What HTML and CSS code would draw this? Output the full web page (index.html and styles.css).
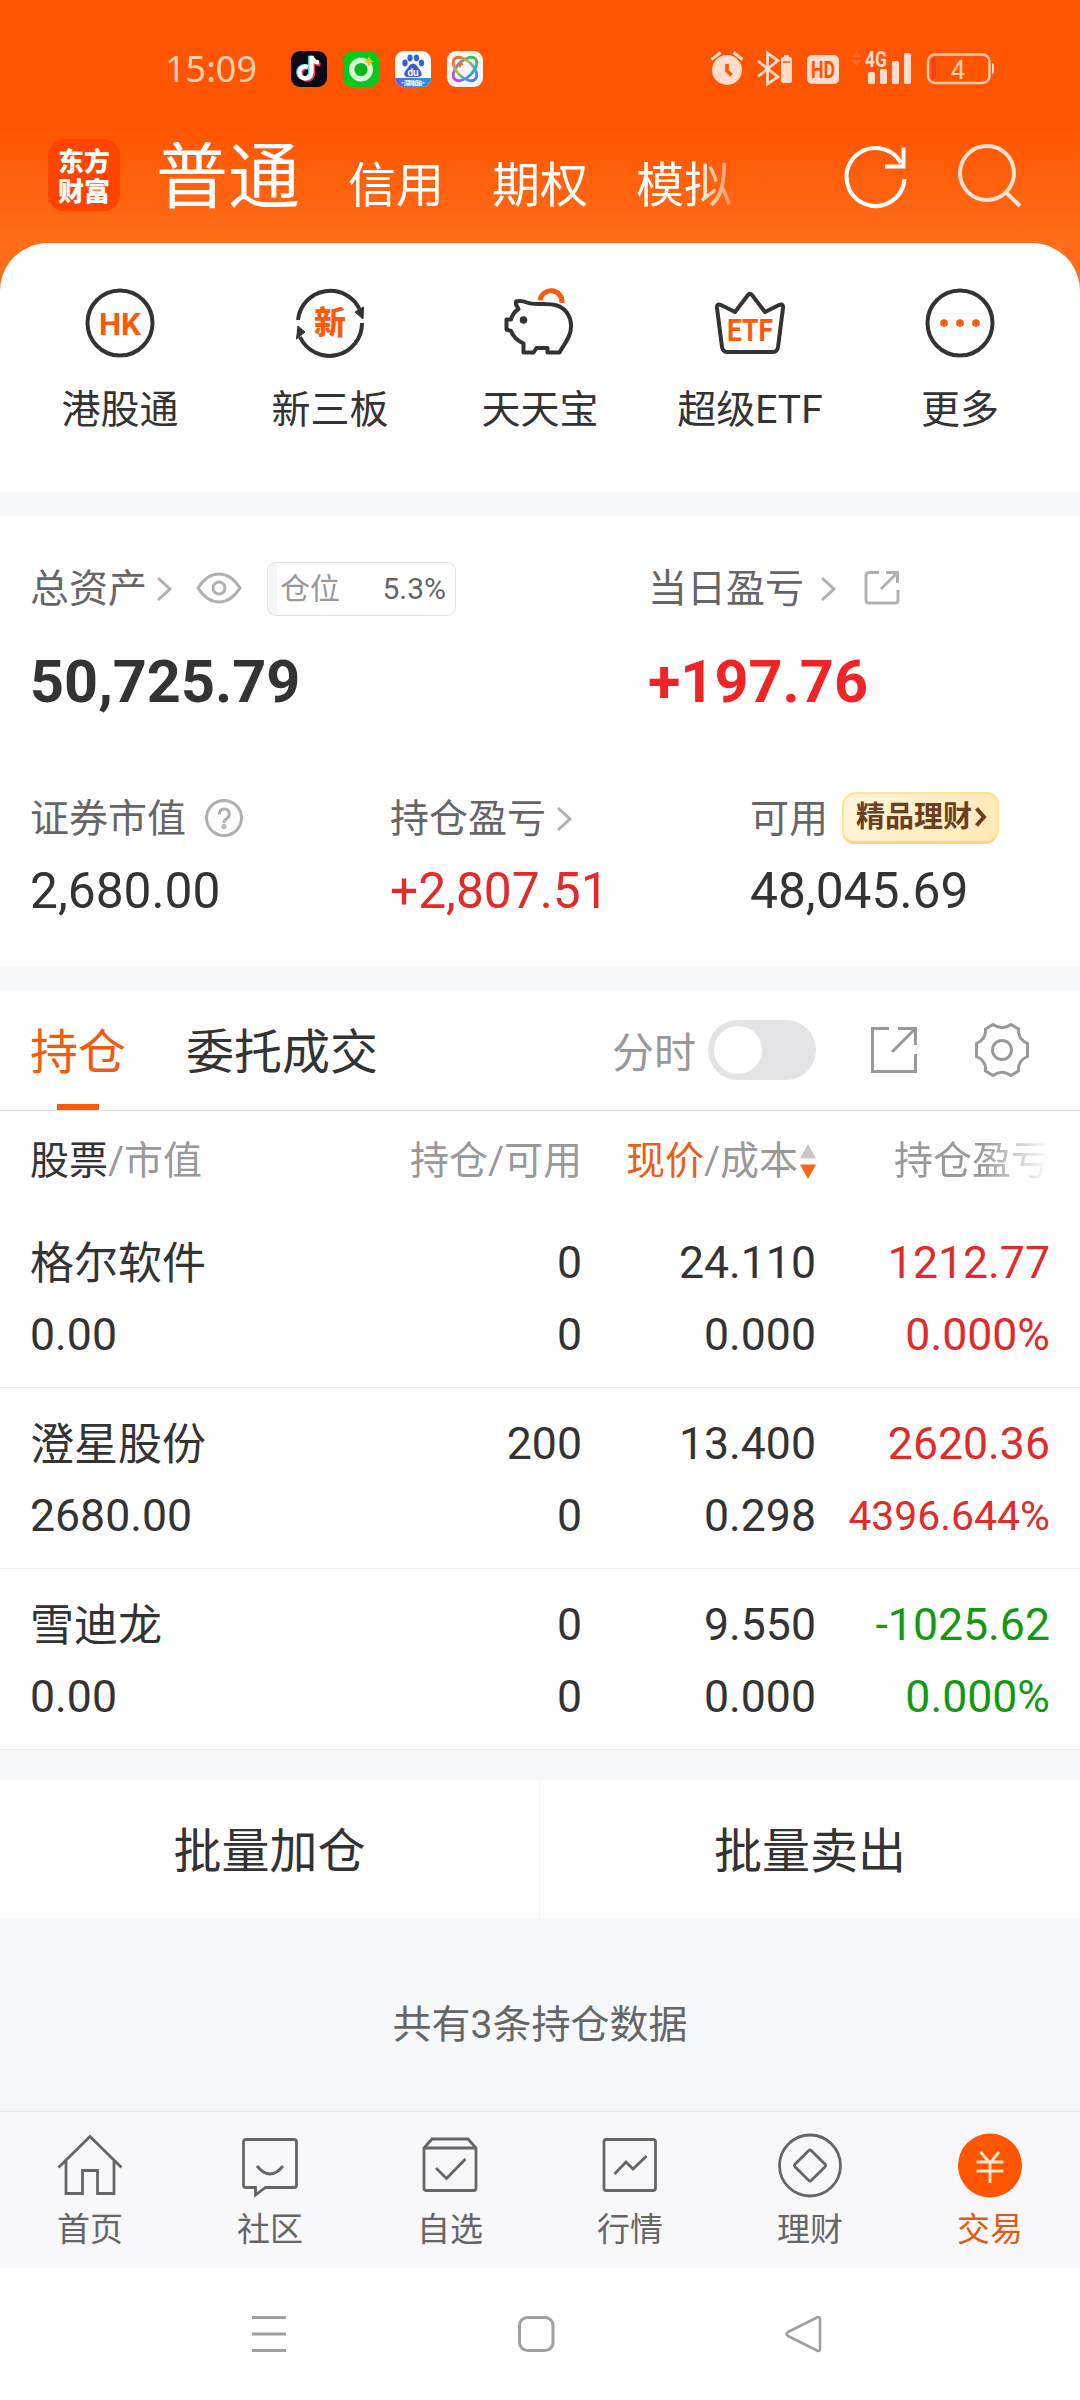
FILE: index.html
```html
<!DOCTYPE html>
<html lang="zh-CN">
<head>
<meta charset="utf-8">
<title>交易</title>
<link rel="stylesheet" href="styles.css">
</head>
<body>
<div class="top">
  <div class="status">
    <span class="clock">15:09</span>
    <div class="apps">
      <svg width="36" height="36" viewBox="0 0 36 36"><rect width="36" height="36" rx="9" fill="#0b0a14"/><g fill="none" stroke-width="4.2"><path d="M18 16.5a6 6 0 1 0 3 6V6c.6 4 3 6 7.500 6.500" stroke="#f0315a" transform="translate(1 1)"/><path d="M16.500 16a6 6 0 1 0 3.500 6V5c.6 4 3 6 7.500 6.500" stroke="#3fe0e6" transform="translate(-.8 -.3)"/><path d="M17 16a6 6 0 1 0 3.500 6V5c.6 4 3 6 7.500 6.500" stroke="#fff"/></g></svg>
      <svg width="36" height="36" viewBox="0 0 36 36"><rect width="36" height="36" rx="9" fill="#08c81b"/><circle cx="18" cy="18.500" r="9.300" fill="#08b818" stroke="#d6f6d4" stroke-width="5.400"/><path d="M26 5l1.600 3.800L31 10.500l-3.400 1.600L26 16l-1.600-3.900L21 10.500l3.400-1.700z" fill="#f6bd12"/></svg>
      <svg width="36" height="36" viewBox="0 0 36 36"><defs><linearGradient id="du"><stop offset="0" stop-color="#5b62e8"/><stop offset="1" stop-color="#139be8"/></linearGradient><clipPath id="dc"><rect width="36" height="36" rx="9"/></clipPath></defs><g clip-path="url(#dc)"><path fill="#fff" d="M0 0h36v36H0z"/><path fill="url(#du)" d="M0 27h36v9H0z"/></g><g fill="#2f62dc"><ellipse cx="10" cy="12" rx="2.700" ry="3.400"/><ellipse cx="15" cy="7" rx="2.600" ry="3.400"/><ellipse cx="21.500" cy="7" rx="2.600" ry="3.400"/><ellipse cx="26.500" cy="12" rx="2.600" ry="3.400"/></g><path d="M18 12.500c3.500 0 4.500 4 7 6.500 3.500 4 1.500 7.500-3 7h-8c-4.500.5-6.500-3-3-7 2.500-2.500 3.500-6.500 7-6.500z" fill="#4157dd"/><text x="18" y="24.500" class="du">du</text><text x="18" y="34" class="du-sub" textLength="27">·深圳加油·</text></svg>
      <svg width="36" height="36" viewBox="0 0 36 36"><defs><linearGradient id="rb" x1="0" y1="0" x2="1" y2="0"><stop offset="0" stop-color="#f06a28"/><stop offset=".4" stop-color="#a8c850"/><stop offset=".7" stop-color="#3da8e0"/><stop offset="1" stop-color="#4680ee"/></linearGradient><linearGradient id="rc" x1="0" y1="0" x2="1" y2="0"><stop offset="0" stop-color="#b44ce8"/><stop offset=".5" stop-color="#4a98e8"/><stop offset="1" stop-color="#48c04a"/></linearGradient></defs><rect width="36" height="36" rx="9" fill="#faf5f3"/><g fill="none" stroke-width="2.800"><ellipse cx="18" cy="18" rx="14.500" ry="8" transform="rotate(-45 18 18)" stroke="url(#rc)"/><ellipse cx="18" cy="18" rx="14.500" ry="8" transform="rotate(45 18 18)" stroke="url(#rb)"/></g><path d="M13 9.500l1.200 2.600 2.800 1.200-2.800 1.200L13 17.500l-1.200-3L9 13.300l2.800-1.200z" fill="#f06a28"/></svg>
    </div>
    <svg class="signals" width="286" height="36" viewBox="0 0 286 36">
      <g fill="#ffdccb">
        <circle cx="17" cy="19" r="15"/>
        <path d="M1.500 8.500l9-7M32.500 8.500l-9-7" stroke="#ffdccb" stroke-width="3"/>
        <path d="M17 13v7l4.500 4" fill="none" stroke="#ff5500" stroke-width="3.500"/>
        <path d="M48 10l20 16-10.500 7V2L68 9.500 48 25.500" fill="none" stroke="#ffdccb" stroke-width="2.800"/>
        <rect x="71" y="6" width="11" height="26" rx="2.500"/><path d="M74 4h5v2h-5z"/><path d="M73 11h7" stroke="#ff5500" stroke-width="1.500"/>
        <rect x="97" y="4" width="32" height="29" rx="5"/>
        <path d="M146.500 0l5 6h-10zM146.500 15l5-6h-10z" fill="#ff6c28"/>
        <rect x="158" y="21" width="7" height="12" rx="1.500"/><rect x="170" y="18" width="7" height="15" rx="1.500"/><rect x="182" y="10" width="7" height="23" rx="1.500"/><rect x="194" y="2" width="7" height="31" rx="1.500"/>
        <rect x="218" y="3.500" width="61.500" height="28.500" rx="7" fill="none" stroke="#ffc9a6" stroke-width="2.500"/><path d="M282 12q2 0 2 3v5q0 3-2 3z"/>
        <rect x="222" y="7" width="3.500" height="21" fill="#f03c28"/>
      </g>
      <text x="113" y="27" class="hd" textLength="24" lengthAdjust="spacingAndGlyphs">HD</text><text x="166" y="16" class="g4" textLength="22" lengthAdjust="spacingAndGlyphs">4G</text><text x="248" y="27.500" class="bat">4</text>
    </svg>
  </div>
  <div class="header">
    <div class="logo"><span>东方</span><span>财富</span></div>
    <div class="modes"><span class="current">普通</span><span>信用</span><span>期权</span><span>模拟</span></div>
    <svg class="head-icons" width="180" height="70" viewBox="0 0 180 70" fill="none" stroke-width="4"><path d="M59 23A29 29 0 1 0 62.500 39" stroke="#fff" transform="translate(0 -1)"/><path d="M61.500 6.500v19H43" stroke="#fff"/><circle cx="145" cy="32" r="27" stroke="#ffe2cf"/><path d="M163.500 51L178 65" stroke="#ffe2cf"/></svg>
  </div>
  <div class="quick">
    <div class="quick-item"><svg width="72" height="72" viewBox="0 0 72 72"><circle cx="36" cy="36" r="32.500" class="ink"/><text x="36" y="47.500" class="ico" textLength="42" lengthAdjust="spacingAndGlyphs">HK</text></svg><span>港股通</span></div>
    <div class="quick-item"><svg width="72" height="72" viewBox="0 0 72 72"><path d="M4 33A32.500 32.500 0 0 1 66 23M68 36A32.500 32.500 0 0 1 6 50" class="ink"/><path d="M61 25l8.500-5-.5 12zM11 45l-8.500 7L4 39z" fill="#333" stroke="#333"/><text x="36" y="47" class="ico xin">新</text></svg><span>新三板</span></div>
    <div class="quick-item"><svg width="72" height="72" viewBox="0 0 72 72"><path d="M36 13.500A11 11 0 0 1 58 16" fill="none" stroke="#fa5a0a" stroke-width="5"/><path d="M23 15.500C31 19 42 15 53 18.500C63 22 67.500 31 67 40C67 50 60 57 55.500 65.500H43.500V61H32.500L29.500 65.500H19.500V56.500C14 54 9 49 7 44L2.500 42.500V32.500H7C8 28 10 25 14.500 22L12 17.500V14.500Q17 13 23 15.500" class="ink"/><circle cx="19.500" cy="33" r="3.800" fill="#333"/></svg><span>天天宝</span></div>
    <div class="quick-item"><svg width="72" height="72" viewBox="0 0 72 72"><path d="M3 21q-.5-5 4-3L21 25 34 8q2-2.500 4 0L51 25 65 18q4.500-2 4 3L64 60q-.8 5-5 5H13q-4.200 0-5-5z" class="ink"/><text x="36" y="54" class="ico" textLength="46" lengthAdjust="spacingAndGlyphs">ETF</text></svg><span>超级ETF</span></div>
    <div class="quick-item"><svg width="72" height="72" viewBox="0 0 72 72"><circle cx="36" cy="36" r="32.500" class="ink"/><g fill="#fa5a0a"><circle cx="20" cy="36" r="3.800"/><circle cx="36" cy="36" r="3.800"/><circle cx="52" cy="36" r="3.800"/></g></svg><span>更多</span></div>
  </div>
</div>

<div class="assets">
  <div class="pair">
    <div>
      <div class="label"><span>总资产</span><svg class="chev first" width="16" height="28" viewBox="0 0 16 28"><path d="M2 3l12 11L2 25"/></svg><svg class="eye" width="46" height="32" viewBox="0 0 46 32"><path d="M2 16Q11 2 23 2t21 14Q35 30 23 30T2 16z"/><circle cx="23" cy="16" r="6"/></svg><div class="ratio"><span>仓位</span><b>5.3%</b></div></div>
      <div class="big">50,725.79</div>
    </div>
    <div>
      <div class="label"><span>当日盈亏</span><svg class="chev wide" width="16" height="28" viewBox="0 0 16 28"><path d="M2 3l12 11L2 25"/></svg><svg class="share" width="36" height="36" viewBox="0 0 36 36"><path d="M15 2.500H5q-3 0-3 3V30q0 3 3 3H31q3 0 3-3V20M22 2.500H33.500V13M33 3L17 19"/></svg></div>
      <div class="big up">+197.76</div>
    </div>
  </div>
  <div class="trio">
    <div>
      <div class="label"><span>证券市值</span><svg class="help" width="40" height="40" viewBox="0 0 40 40"><circle cx="20" cy="20" r="17.500"/><path d="M15.300 16.500q0-5.500 5-5.500t5 5q0 3-2.700 4.800Q20 22.500 20 25"/><circle cx="20" cy="28.500" r="1" /></svg></div>
      <div class="mid">2,680.00</div>
    </div>
    <div>
      <div class="label"><span>持仓盈亏</span><svg class="chev" width="16" height="28" viewBox="0 0 16 28"><path d="M2 3l12 11L2 25"/></svg></div>
      <div class="mid up">+2,807.51</div>
    </div>
    <div>
      <div class="label"><span>可用</span><div class="promo">精品理财<svg width="13" height="22" viewBox="0 0 13 22"><path d="M2.500 2.500L10 11l-7.500 8.500" class="promo-arrow"/></svg></div></div>
      <div class="mid">48,045.69</div>
    </div>
  </div>
</div>

<div class="tabs">
  <span class="tab on">持仓</span><span class="tab">委托成交</span>
  <span class="minute">分时</span><span class="toggle"></span>
  <svg class="export" width="48" height="48" viewBox="0 0 48 48"><path d="M19 2.500H2.500V45.500H45.500V28M28 2.500H45.500V19M45 3L22 26"/></svg>
  <svg class="gear" width="56" height="56" viewBox="0 0 56 56"><path d="M19 2.500Q28 9 37 2.500L44.500 7Q43.500 17 53.500 21.500V34.500Q43.500 39 44.500 49L37 53.500Q28 47 19 53.500L11.500 49Q12.500 39 2.500 34.500V21.500Q12.500 17 11.500 7Z"/><circle cx="28" cy="28" r="9.500"/></svg>
</div>

<div class="grid heads">
  <span><i>股票</i>/市值</span><span>持仓/可用</span>
  <span class="sorted"><em>现价</em>/成本<svg width="16" height="36" viewBox="0 0 16 36"><path d="M8 0l8 14.500H0z" fill="#c8c8c8"/><path d="M0 20.500h16L8 35z" fill="#fa6414"/></svg></span>
  <span class="fading">持仓盈亏</span>
</div>
<div class="grid row"><span class="name">格尔软件</span><span>0</span><span>24.110</span><span class="up">1212.77</span><span>0.00</span><span>0</span><span>0.000</span><span class="up">0.000%</span></div>
<div class="grid row"><span class="name">澄星股份</span><span>200</span><span>13.400</span><span class="up">2620.36</span><span>2680.00</span><span>0</span><span>0.298</span><span class="up tight">4396.644%</span></div>
<div class="grid row"><span class="name">雪迪龙</span><span>0</span><span>9.550</span><span class="down">-1025.62</span><span>0.00</span><span>0</span><span>0.000</span><span class="down">0.000%</span></div>

<div class="batch"><span>批量加仓</span><span>批量卖出</span></div>
<div class="total">共有3条持仓数据</div>

<div class="nav">
  <div><svg width="72" height="72" viewBox="0 0 72 72"><path d="M4.500 38.500L36 7.500 67.500 38.500M12 32V64.500H28.500V41.500H43.500V64.500H60V32"/></svg><span>首页</span></div>
  <div><svg width="72" height="72" viewBox="0 0 72 72"><path d="M12 10.500H60q2.500 0 2.500 2.500V56q0 2.500-2.500 2.500H31.500L21.500 66V58.500H12q-2.500 0-2.500-2.500V13q0-2.500 2.500-2.500zM23 37q13 16 26 0"/></svg><span>社区</span></div>
  <div><svg width="72" height="72" viewBox="0 0 72 72"><path d="M10 19L18 10H54l8 9V59q0 2.500-2.500 2.500H12.500Q10 61.500 10 59zM10 19H62M22 39L32.500 49.500 51.500 30"/></svg><span>自选</span></div>
  <div><svg width="72" height="72" viewBox="0 0 72 72"><rect x="10" y="10.500" width="51.500" height="51" rx="2.500"/><path d="M20.500 45L32 33l7 7L52.500 27"/></svg><span>行情</span></div>
  <div><svg width="72" height="72" viewBox="0 0 72 72"><circle cx="36" cy="36.500" r="30.500"/><rect x="24.500" y="25" width="23" height="23" rx="2" transform="rotate(45 36 36.500)"/></svg><span>理财</span></div>
  <div class="active"><svg width="72" height="72" viewBox="0 0 72 72"><circle cx="36" cy="36.500" r="32" fill="#ff5500" stroke="none"/><path d="M26.500 23L36 34 45 23M36 34V54M22.500 33H49.500M22.500 42H49.500" stroke="#ffe6cf"/></svg><span>交易</span></div>
</div>
<div class="system">
  <svg width="40" height="40" viewBox="0 0 40 40"><path d="M3 3.500H37M3 20H37M3 36.500H37"/></svg>
  <svg width="40" height="40" viewBox="0 0 40 40"><rect x="3.500" y="3.500" width="33.500" height="33" rx="8"/></svg>
  <svg width="40" height="40" viewBox="0 0 40 40"><path d="M34 3.500q3-1.500 3 1.500V35q0 3-3 1.500L5 22q-3-2 0-4z" stroke-width="2.600"/></svg>
</div>
</body>
</html>
```
FILE: styles.css
```css
* { box-sizing: border-box; }
body {
  margin: 0;
  width: 1080px;
  height: 2400px;
  overflow: hidden;
  background: #fff;
  color: #333;
  font-family: Roboto, "Noto Sans CJK SC", sans-serif;
  font-size: 39px;
}
svg { display: block; flex: none; overflow: visible; }
i, em { font-style: normal; }

.top { background: linear-gradient(#ff5500 0, #ff5500 125px, #ff6d1a 243px); }
.status { height: 128px; display: flex; padding: 51px 84px 0 165px; line-height: 36px; }
.clock { width: 126px; font-family: "Noto Sans", sans-serif; font-size: 36px; color: #ffcfb0; }
.apps { display: flex; gap: 16px; }
.signals { margin-left: auto; }
.du { font: 700 10px Roboto, sans-serif; fill: #fff; text-anchor: middle; }
.du-sub { font: 700 6px "Noto Sans CJK SC", sans-serif; fill: #fff; text-anchor: middle; }
.hd { font: 700 24px Roboto, sans-serif; fill: #ff5500; text-anchor: middle; }
.g4 { font: 700 22px Roboto, sans-serif; fill: #ffdccb; text-anchor: middle; }
.bat { font: 26px Roboto, sans-serif; fill: #ffcfb0; text-anchor: middle; }

.header { height: 115px; display: flex; padding: 11px 58px 0 48px; }
.logo {
  width: 72px; height: 72px; padding-top: 6px;
  display: flex; flex-direction: column; align-items: center;
  border-radius: 16px; background: #ff4400; color: #fff;
  font: 900 26px/30px "Noto Sans CJK SC", sans-serif;
}
.modes {
  width: 618px; margin-left: 36px; margin-top: 3px; display: flex; align-items: baseline; gap: 48px;
  color: #fff; font-size: 48px; line-height: 72px; white-space: nowrap;
  -webkit-mask-image: linear-gradient(90deg, #000 540px, transparent 592px);
  mask-image: linear-gradient(90deg, #000 540px, transparent 592px);
}
.modes .current { font-size: 72px; }
.head-icons { margin-left: auto; margin-top: 2px; }

.quick { height: 249px; padding: 44px 15px 0; border-radius: 48px 48px 0 0; background: #fff; display: grid; grid-template-columns: repeat(5, 1fr); }
.quick-item { display: flex; flex-direction: column; align-items: center; line-height: 60px; }
.quick-item svg { margin-bottom: 21px; }
.ink { fill: none; stroke: #333; stroke-width: 4; stroke-linejoin: round; }
.ico { fill: #fa5a0a; text-anchor: middle; font-family: Roboto, "Noto Sans CJK SC", sans-serif; font-size: 32px; font-weight: 700; }
.xin { font-weight: 900; }

.assets { height: 498px; border: solid #f7f8fa; border-width: 24px 0; padding: 42px 30px 0; }
.pair { display: grid; grid-template-columns: 618px 1fr; height: 230px; }
.trio { display: grid; grid-template-columns: 360px 360px 1fr; }
.label { display: flex; align-items: center; height: 62px; line-height: 62px; color: #666; }
.label svg { fill: none; stroke: #b0b0b0; stroke-width: 3; }
.label .chev { margin-left: 10px; }
.label .chev.wide { margin-left: 16px; }
.label .chev.first { margin-left: 9px; }
.label .eye { margin: -3px 0 0 24px; }
.label .share { margin: -2px 0 0 28px; }
.label .help { margin: -2px 0 0 18px; }
.ratio {
  width: 189px; height: 54px; margin: -1px 0 0 25px; padding: 0 9px 0 12px;
  display: flex; justify-content: space-between; align-items: center;
  border: 1px solid #e2e2e4; border-radius: 9px; font-size: 30px; line-height: 50px; color: #999;
  background: linear-gradient(90deg, #f6f6f9 9px, #fff 9px);
}
.ratio b { font-weight: 400; color: #666; }
.big { margin-top: 26px; font-size: 59.400px; line-height: 72px; font-weight: 700; }
.mid { margin-top: 10px; font-size: 49.700px; line-height: 62px; }
.up { color: #e02b2b; }
.big.up { color: #ee2427; }
.down { color: #119a11; }
.label .promo {
  width: 157px; height: 52px; margin: -3px 0 0 14px; padding-left: 12px; display: flex; align-items: center; gap: 2px;
  border: 2px solid #f9e792; border-bottom: 3px solid #f5d988; border-radius: 14px 12px 14px 12px;
  background: linear-gradient(110deg, #fff4dc, #ffeab4); color: #6a4020; font-size: 29px; line-height: 46px; font-weight: 700;
}
.label .promo-arrow { stroke: #6a4020; stroke-width: 4; }

.tabs { height: 121px; padding: 0 50px 0 30px; border-bottom: 1px solid #dedee0; display: flex; align-items: center; font-size: 48px; }
.tab { margin-right: 60px; height: 120px; line-height: 125px; }
.tab.on { color: #f25a0c; background: linear-gradient(#fa5a0a, #fa5a0a) center bottom / 42px 6px no-repeat; }
.minute { margin-left: auto; margin-top: -2px; color: #999; font-size: 42px; }
.toggle { width: 108px; height: 60px; margin-left: 12px; padding: 6px; border-radius: 30px; background: #e4e4e7; }
.toggle::before { content: ""; display: block; width: 48px; height: 48px; border-radius: 50%; background: #fff; }
.tabs svg { fill: none; stroke: #999; stroke-width: 3; }
.export { margin-left: 54px; }
.gear { margin-left: 56px; }

.grid { display: grid; grid-template-columns: 318px 234px 234px 234px; padding: 0 30px; text-align: right; }
.grid > :nth-child(4n + 1) { text-align: left; }
.heads { height: 96px; line-height: 101px; color: #999; }
.heads i { color: #333; }
.heads em { color: #e86014; }
.sorted { display: flex; justify-content: flex-end; align-items: center; }
.sorted svg { margin-left: 2px; }
.fading { -webkit-mask-image: linear-gradient(90deg, #000 165px, transparent 234px); mask-image: linear-gradient(90deg, #000 165px, transparent 234px); }
.row { height: 181px; padding-top: 20px; padding-bottom: 16px; border-bottom: 1px solid #ececee; font-size: 44.600px; line-height: 72px; }
.row .name { font-size: 44px; padding-top: 1px; }
.row .tight { font-size: 40.900px; }
.grid.row { grid-template-rows: 72px 72px; }

.batch { height: 168px; border-top: 30px solid #f7f8fa; display: grid; grid-template-columns: 1fr 1fr; text-align: center; font-size: 48px; line-height: 143px; }
.batch span { height: 138px; }
.batch span:first-child { border-right: 1px solid #f3f4f6; }
.total { height: 193px; padding-top: 77px; background: #f7f8fa; text-align: center; line-height: 60px; color: #666; }
.nav { height: 157px; padding-top: 17px; background: #f8f8fa; border-top: 1px solid #e2e3e5; display: grid; grid-template-columns: repeat(6, 1fr); color: #666; font-size: 33px; line-height: 50px; }
.nav div { display: flex; flex-direction: column; align-items: center; gap: 4px; }
.nav svg { fill: none; stroke: #666; stroke-width: 2.800; }
.nav .active { color: #e25a14; }
.system { height: 132px; padding: 0 257px 0 249px; display: flex; justify-content: space-between; align-items: center; }
.system svg { fill: none; stroke: #a0a0a0; stroke-width: 3; }
```
